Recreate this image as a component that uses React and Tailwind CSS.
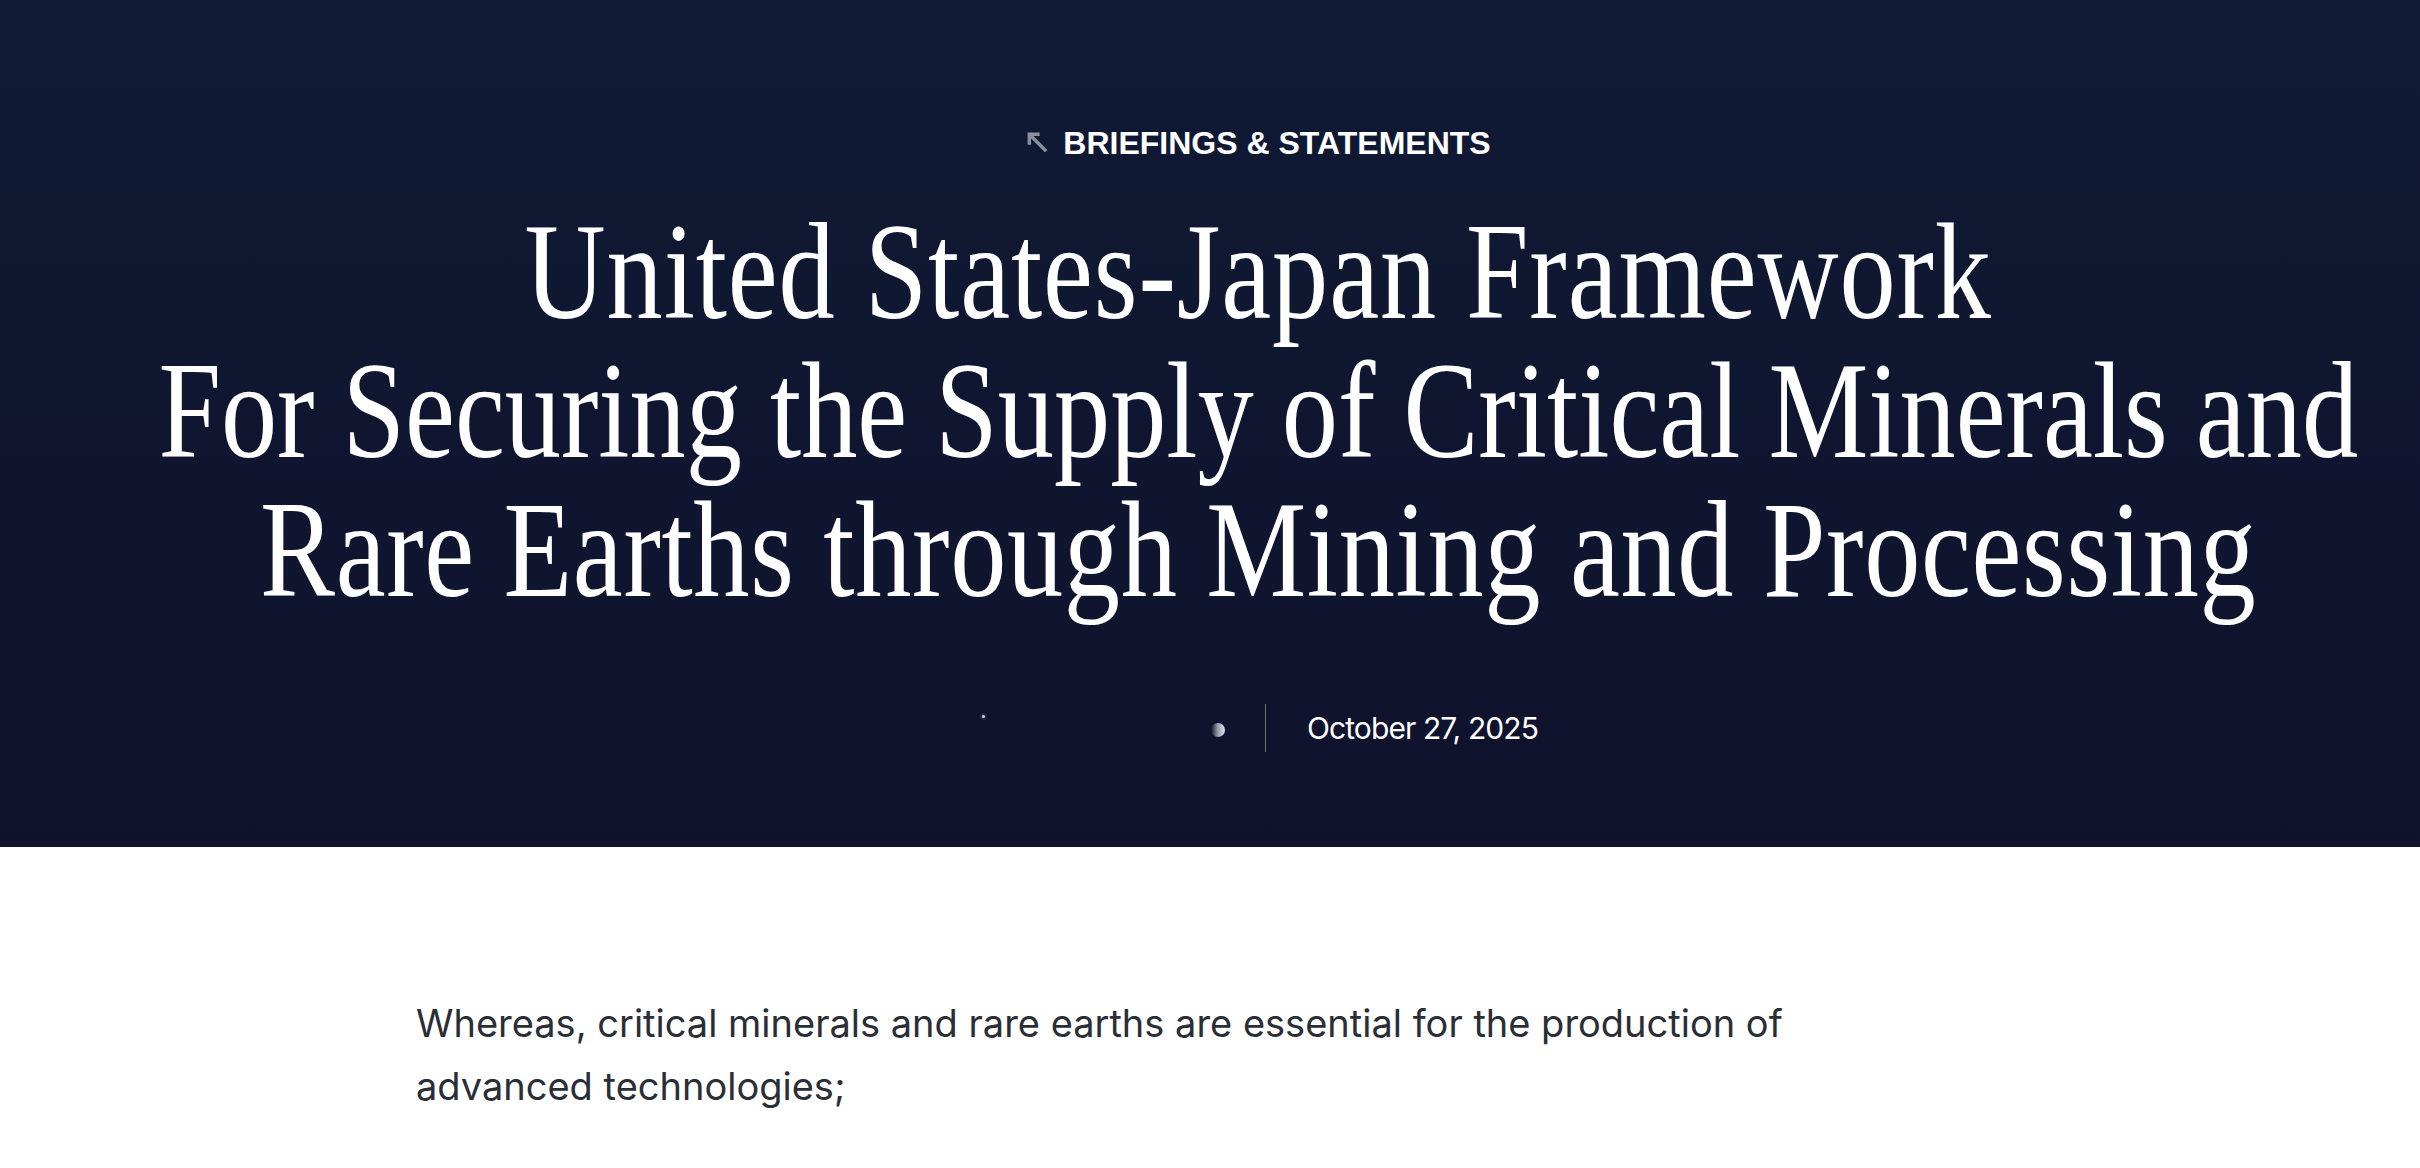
import React from "react";

export default function App() {
  return (
    <div className="min-h-[1168px] w-full bg-white">
      <header className="w-full bg-linear-to-b from-[#101a34] to-[#0f122d] pl-24 pt-[125px] pb-[95px]">
        <div className="flex flex-col items-center">
          <a className="flex h-[36px] items-center gap-[12px] text-white" href="#">
            <svg width="26" height="26" viewBox="0 0 24 24" fill="none" stroke="#8b909c" strokeWidth="3.2" strokeLinecap="butt" strokeLinejoin="miter">
              <path d="M4 13.5V4h9.5" />
              <path d="M19.5 19.5 4 4" />
            </svg>
            <span className="text-[32px] font-bold leading-none text-white" style={{ fontFamily: '"Liberation Sans", Arial, sans-serif' }}>
              BRIEFINGS &amp; STATEMENTS
            </span>
          </a>
          <h1
            className="mt-[42px] origin-center scale-x-[0.82] whitespace-nowrap text-center text-[137px] font-normal leading-[139px] text-white"
            style={{ fontFamily: '"Liberation Serif", "Times New Roman", serif' }}
          >
            <span className="inline-block tracking-[0.008em]">United States-Japan Framework</span>
            <br />
            For Securing the Supply of Critical Minerals and
            <br />
            <span className="inline-block tracking-[0.006em]">Rare Earths through Mining and Processing</span>
          </h1>
          <div className="mt-[84px] flex h-[48px] items-center">
            <div className="relative h-[48px] w-[247px]">
              <span className="absolute left-[4px] top-[11px] h-[3px] w-[3px] rounded-full bg-white/80 shadow-[0_0_3px_rgba(255,255,255,0.7)]" />
              <span className="absolute right-0 top-[19px] h-[14px] w-[14px] rounded-full bg-linear-to-r from-transparent via-[#9aa0ad] to-[#e4e6ea]" />
            </div>
            <div className="ml-[40px] h-[48px] w-px bg-[#6b7081]" />
            <span
              className="ml-[41px] text-[30px] leading-none tracking-[-0.03em] text-white"
              style={{ fontFamily: 'Inter, "Noto Sans", sans-serif' }}
            >
              October 27, 2025
            </span>
          </div>
        </div>
      </header>
      <main className="w-full pl-24 pt-[145px]">
        <div className="mx-auto w-[1684px]">
          <p
            className="max-w-[1440px] text-[38px] leading-[63px] tracking-normal text-[#2a2e37]"
            style={{ fontFamily: 'Inter, "Noto Sans", sans-serif' }}
          >
            Whereas, critical minerals and rare earths are essential for the production of advanced technologies;
          </p>
        </div>
      </main>
    </div>
  );
}
